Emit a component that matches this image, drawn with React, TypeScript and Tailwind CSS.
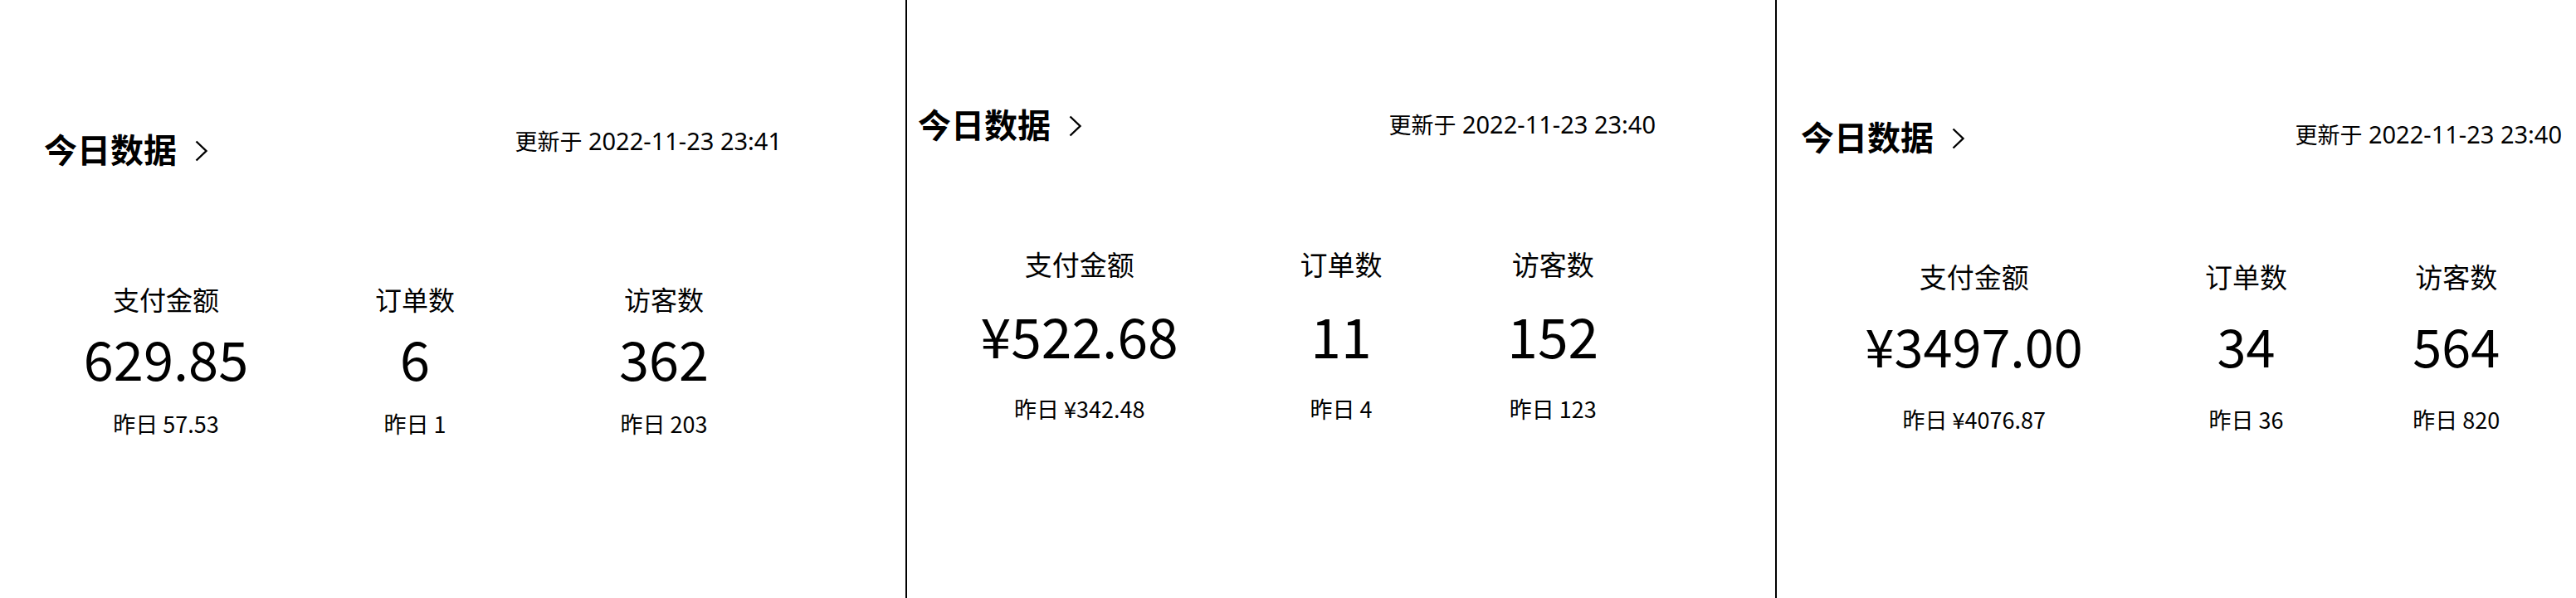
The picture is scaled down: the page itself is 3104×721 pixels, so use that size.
import React from "react";

type Stat = { label: string; value: string; prev: string; colClass: string };

function Chevron() {
  return (
    <svg className="ml-[22px] shrink-0" width="16" height="40" viewBox="0 0 16 40" fill="none">
      <polyline points="1.5,11.5 13.5,23 1.5,34.5" stroke="#000" strokeWidth="2.4" strokeLinejoin="miter" />
    </svg>
  );
}

function Stamp({ time, cls }: { time: string; cls: string }) {
  return (
    <span className={`${cls} text-[29px] leading-none whitespace-nowrap font-['Noto_Sans','Noto_Sans_CJK_SC',sans-serif]`}>
      <span className="text-[27px] font-['Noto_Sans_CJK_SC',sans-serif]">更新于</span> 2022-11-23 {time}
    </span>
  );
}

function Column({ s, labelCls, numCls, prevCls, numMt, prevMt }: { s: Stat; labelCls: string; numCls: string; prevCls: string; numMt: string; prevMt: string }) {
  return (
    <div className={`flex flex-col items-center ${s.colClass}`}>
      <div className={`${labelCls} leading-none whitespace-nowrap`}>{s.label}</div>
      <div className={`${numCls} ${numMt} leading-none whitespace-nowrap`}>{s.value}</div>
      <div className={`${prevCls} ${prevMt} leading-none whitespace-nowrap`}>{s.prev}</div>
    </div>
  );
}

export default function App() {
  const p1: Stat[] = [
    { label: "支付金额", value: "629.85", prev: "昨日 57.53", colClass: "" },
    { label: "订单数", value: "6", prev: "昨日 1", colClass: "" },
    { label: "访客数", value: "362", prev: "昨日 203", colClass: "" },
  ];
  const p2: Stat[] = [
    { label: "支付金额", value: "¥522.68", prev: "昨日 ¥342.48", colClass: "w-[236px]" },
    { label: "订单数", value: "11", prev: "昨日 4", colClass: "w-[96px]" },
    { label: "访客数", value: "152", prev: "昨日 123", colClass: "w-[116px]" },
  ];
  const p3: Stat[] = [
    { label: "支付金额", value: "¥3497.00", prev: "昨日 ¥4076.87", colClass: "w-[260px]" },
    { label: "订单数", value: "34", prev: "昨日 36", colClass: "w-[97px]" },
    { label: "访客数", value: "564", prev: "昨日 820", colClass: "w-[111px]" },
  ];

  return (
    <div className="flex h-[721px] w-[3104px] bg-white text-black font-['Noto_Sans_CJK_SC',sans-serif]">
      {/* Panel 1 */}
      <div className="flex w-[1091px] shrink-0 flex-col pt-[155px]">
        <div className="ml-[53px] flex w-[889px] items-start justify-between">
          <div className="mt-[4px] flex items-center">
            <span className="text-[40px] font-bold leading-none">今日数据</span>
            <Chevron />
          </div>
          <Stamp time="23:41" cls="" />
        </div>
        <div className="ml-[50px] mt-[145px] grid w-[900px] grid-cols-3">
          {p1.map((s) => (
            <Column key={s.label} s={s} labelCls="text-[32px]" numCls="text-[65px]" prevCls="text-[27px]" numMt="mt-[23px]" prevMt="mt-[33px]" />
          ))}
        </div>
      </div>
      <div className="w-[2px] shrink-0 bg-black" />
      {/* Panel 2 */}
      <div className="flex w-[1046px] shrink-0 flex-col pt-[129px]">
        <div className="ml-[13px] flex w-[889px] items-start justify-between">
          <div className="flex items-center">
            <span className="text-[40px] font-bold leading-none">今日数据</span>
            <Chevron />
          </div>
          <Stamp time="23:40" cls="mt-[6px]" />
        </div>
        <div className="ml-[15px] mt-[133px] flex w-[896px] justify-around">
          {p2.map((s) => (
            <Column key={s.label} s={s} labelCls="text-[33px]" numCls="text-[66px]" prevCls="text-[27px]" numMt="mt-[35px]" prevMt="mt-[43px]" />
          ))}
        </div>
      </div>
      <div className="w-[2px] shrink-0 bg-black" />
      {/* Panel 3 */}
      <div className="flex min-w-0 flex-1 flex-col pt-[144px]">
        <div className="ml-[29px] flex w-[917px] items-start justify-between">
          <div className="flex items-center">
            <span className="text-[40px] font-bold leading-none">今日数据</span>
            <Chevron />
          </div>
          <Stamp time="23:40" cls="mt-[3px]" />
        </div>
        <div className="ml-[33px] mt-[133px] flex w-[916px] justify-around">
          {p3.map((s) => (
            <Column key={s.label} s={s} labelCls="text-[33px]" numCls="text-[63px]" prevCls="text-[27px]" numMt="mt-[34px]" prevMt="mt-[45px]" />
          ))}
        </div>
      </div>
    </div>
  );
}
